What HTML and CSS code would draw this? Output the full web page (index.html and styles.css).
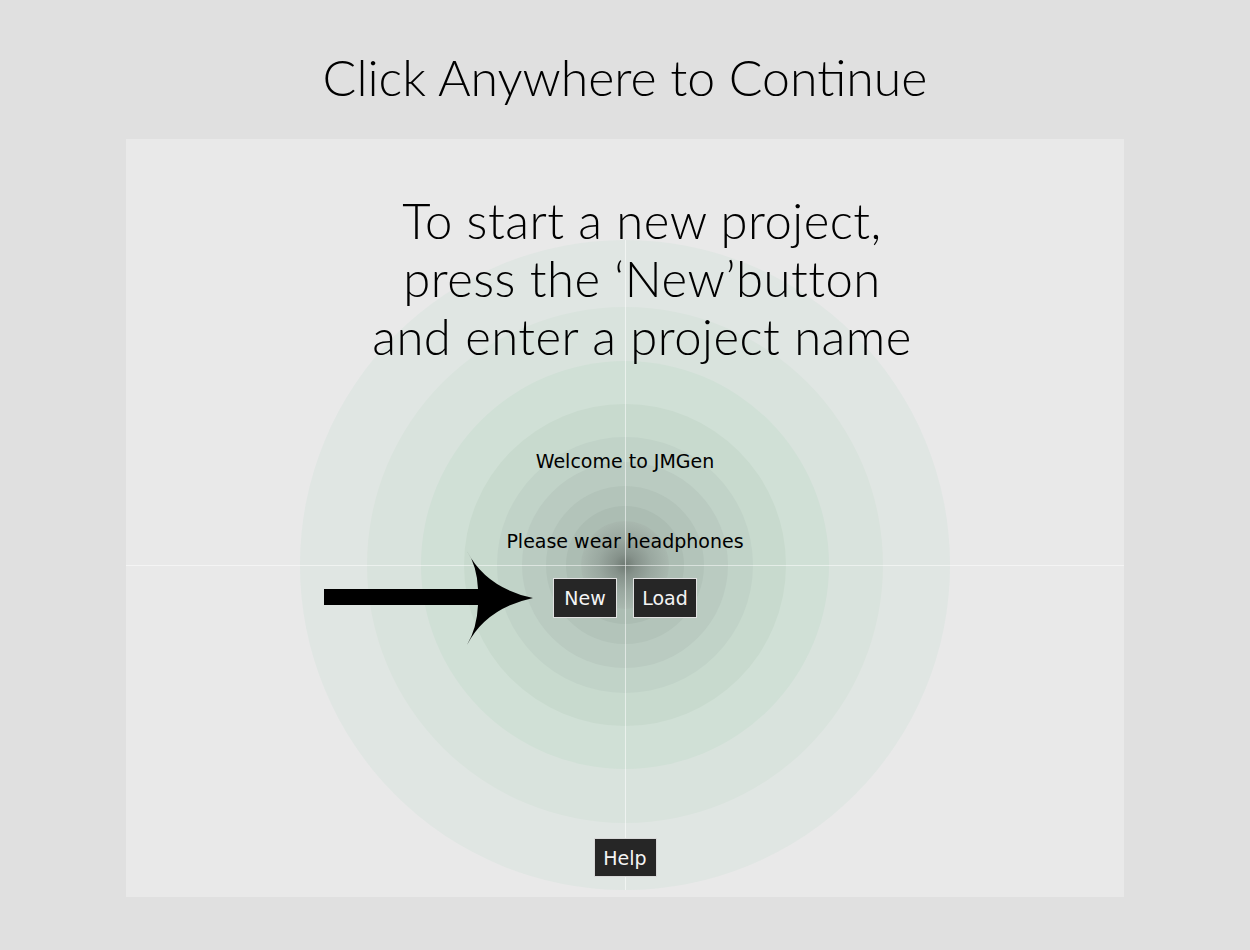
FILE: index.html
```html
<!DOCTYPE html>
<html lang="en">
<head>
<meta charset="utf-8">
<title>JMGen</title>
<link rel="stylesheet" href="styles.css">
</head>
<body>
  <header class="top">
    <h1 class="top-title">Click Anywhere to Continue</h1>
  </header>
  <main class="panel">
    <svg class="backdrop" viewBox="126 139 998 758" width="998" height="758" aria-hidden="true">
      <defs>
        <radialGradient id="core" cx="625" cy="565" r="44" gradientUnits="userSpaceOnUse">
          <stop offset="0" stop-color="#6f7a73"/>
          <stop offset="0.25" stop-color="#86928b"/>
          <stop offset="0.6" stop-color="#9aa8a0"/>
          <stop offset="1" stop-color="#a9b8af"/>
        </radialGradient>
      </defs>
      <circle cx="625" cy="565" r="325" fill="#e0e6e3"/>
      <circle cx="625" cy="565" r="258" fill="#d9e3dd"/>
      <circle cx="625" cy="565" r="204" fill="#d0e0d6"/>
      <circle cx="625" cy="565" r="161" fill="#c8dace"/>
      <circle cx="625" cy="565" r="128" fill="#c1d3c8"/>
      <circle cx="625" cy="565" r="103" fill="#bacbc1"/>
      <circle cx="625" cy="565" r="79" fill="#b3c4ba"/>
      <circle cx="625" cy="565" r="59" fill="#acbdb3"/>
      <circle cx="625" cy="565" r="44" fill="url(#core)"/>
      <line x1="625.5" y1="240" x2="625.5" y2="890" stroke="rgba(255,255,255,0.55)" stroke-width="1"/>
      <line x1="126" y1="565.5" x2="1124" y2="565.5" stroke="rgba(255,255,255,0.5)" stroke-width="1"/>
      <path d="M324 589 L478 589 Q477 566 467 551 Q486 588 533 598 Q486 608 467 645 Q477 628 478 605 L324 605 Z" fill="#000"/>
    </svg>
    <h2 class="intro">To start a new project,<br>press the ‘New’button<br>and enter a project name</h2>
    <p class="note note-welcome">Welcome to JMGen</p>
    <p class="note note-phones">Please wear headphones</p>
    <div class="actions">
      <button class="btn btn-main" type="button">New</button>
      <button class="btn btn-main" type="button">Load</button>
    </div>
    <button class="btn btn-help" type="button">Help</button>
  </main>
</body>
</html>
```
FILE: styles.css
```css
html, body {
  margin: 0;
  padding: 0;
}

body {
  background: #e0e0e0;
  width: 1250px;
  height: 950px;
  overflow: hidden;
  font-family: "DejaVu Sans", "Liberation Sans", sans-serif;
  color: #000;
}

.top {
  height: 139px;
  display: flex;
  justify-content: center;
}

.top-title {
  margin: 0;
  padding-top: 47px;
  font-family: Lato, "Open Sans", sans-serif;
  font-weight: 300;
  font-size: 50px;
  line-height: 60px;
  letter-spacing: 0;
}

.panel {
  position: relative;
  width: 998px;
  height: 758px;
  margin-left: 126px;
  background: #e9e9e9;
  display: flex;
  flex-direction: column;
  align-items: center;
  box-sizing: border-box;
  padding-bottom: 20px;
}

.backdrop {
  position: absolute;
  left: 0;
  top: 0;
  z-index: 0;
}

.intro,
.note,
.actions,
.btn-help {
  position: relative;
  z-index: 1;
}

.intro {
  margin: 52px 0 0 34px;
  font-family: Lato, "Open Sans", sans-serif;
  font-weight: 300;
  font-size: 49px;
  line-height: 58px;
  text-align: center;
  letter-spacing: 0.5px;
}

.note {
  margin: 0;
  font-size: 19px;
  line-height: 24px;
}

.note-welcome {
  margin-top: 84px;
}

.note-phones {
  margin-top: 56px;
}

.actions {
  display: flex;
  gap: 16px;
  margin-top: 25px;
}

.btn {
  background: #262626;
  color: #f4f4f4;
  border: 1px solid #e2e2e2;
  font-family: "DejaVu Sans", "Liberation Sans", sans-serif;
  font-size: 19px;
  padding: 0;
  box-sizing: border-box;
  display: flex;
  align-items: center;
  justify-content: center;
}

.btn-main {
  width: 64px;
  height: 40px;
}

.btn-help {
  width: 63px;
  height: 39px;
  margin-top: auto;
  border-color: #d8d8d8;
}
```
